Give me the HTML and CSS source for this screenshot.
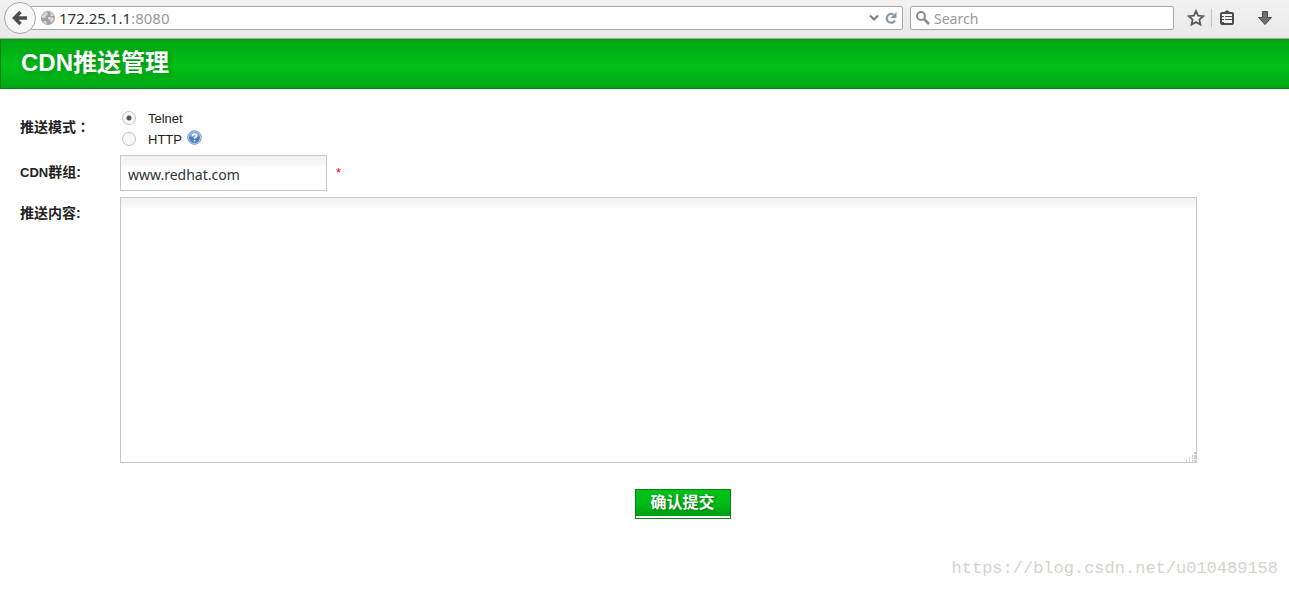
FILE: index.html
```
<!DOCTYPE html>
<html lang="zh-CN">
<head>
    <meta charset="UTF-8">
    <meta name="viewport" content="width=device-width, initial-scale=1.0">
    <title>CDN推送管理</title>
    <link rel="stylesheet" href="styles.css">
</head>
<body>
    <nav class="toolbar">
        <button type="button" class="back" aria-label="Back">
            <svg width="16" height="16" viewBox="0 0 16 16"><path d="M8.5 2L2.5 8l6 6M3 8h12" fill="none" stroke="#4c4c4c" stroke-width="3.4"/></svg>
        </button>
        <div class="address">
            <svg class="globe" width="14" height="14" viewBox="0 0 14 14"><circle cx="7" cy="7" r="7" fill="#a0a0a0"/><path d="M1 5l2-3 3-1 1 2-2 2-1 2-3 0zM9 1l3 2 1 2-3 0zM7 6l3 0 3 1-1 3-2 2-1-3-2-1zM2 10l3 0 1 3-2 0z" fill="#d8d8d8"/></svg>
            <span class="url">172.25.1.1<span class="port">:8080</span></span>
            <button type="button" class="icon-button" aria-label="History">
                <svg width="10" height="8" viewBox="0 0 10 8"><path d="M1 1.5l4 4 4-4" fill="none" stroke="#808080" stroke-width="2.2"/></svg>
            </button>
            <button type="button" class="icon-button" aria-label="Reload">
                <svg width="12" height="12" viewBox="0 0 12 12"><path d="M8.5 2.6A4.4 4.4 0 1 0 10 8.5" fill="none" stroke="#8795a5" stroke-width="2.2"/><path d="M11.5 0v6h-6z" fill="#8795a5"/></svg>
            </button>
        </div>
        <div class="search">
            <svg width="14" height="14" viewBox="0 0 14 14"><circle cx="5" cy="5" r="4" fill="none" stroke="#8d8d8d" stroke-width="2"/><path d="M8 8l5 5" stroke="#8d8d8d" stroke-width="2.6"/></svg>
            <input type="text" placeholder="Search" aria-label="Search">
        </div>
        <div class="tools">
            <button type="button" class="icon-button" aria-label="Bookmark">
                <svg width="18" height="18" viewBox="0 0 18 18"><path d="M9 2l2.1 4.6 5 .6-3.7 3.4 1 5L9 13.1l-4.4 2.5 1-5L1.9 7.2l5-.6z" fill="#f4f4f4" stroke="#5a5a5a" stroke-width="1.8"/></svg>
            </button>
            <span class="divider"></span>
            <button type="button" class="icon-button" aria-label="Bookmarks list">
                <svg width="14" height="15" viewBox="0 0 14 15"><rect x="1" y="3" width="12" height="11" rx="1" fill="#f4f4f4" stroke="#4c4c4c" stroke-width="2"/><path d="M3 3l4-3 4 3v1H3z" fill="#4c4c4c"/><path d="M2 6.500h2M2 9.500h2M2 12.500h2M5 6.500h7M5 9.500h7" stroke="#4c4c4c" stroke-width="1"/></svg>
            </button>
            <button type="button" class="icon-button download" aria-label="Downloads">
                <svg width="14" height="14" viewBox="0 0 14 14"><path d="M4.5.5h5v6h4L7 13.5.5 6.5h4z" fill="#707070" stroke="#4c4c4c"/></svg>
            </button>
        </div>
    </nav>

    <header class="page-header">
        <h1>CDN推送管理</h1>
    </header>

    <form class="push-form">
        <div class="row" role="radiogroup" aria-labelledby="modeLabel">
            <span class="label mode-label" id="modeLabel">推送模式<span class="colon" lang="zh-TW">：</span></span>
            <div class="modes">
                <div class="mode">
                    <input type="radio" name="mode" id="telnet" checked>
                    <label for="telnet">Telnet</label>
                </div>
                <div class="mode">
                    <input type="radio" name="mode" id="http">
                    <label for="http">HTTP</label>
                    <svg class="help" width="15" height="15" viewBox="0 0 15 15">
                        <circle cx="7.5" cy="7.5" r="6.8" fill="#c9dcf0" stroke="#7194c0"/>
                        <circle cx="7.5" cy="7.5" r="5.5" fill="#4a7fbf"/>
                        <path d="M2.5 6a5 4.5 0 0 1 10 0q-5 3-10 0z" fill="#82aadb"/>
                        <path d="M5.5 6q0-2 2-2t2 1.700q0 1-1 1.500t-1 1.500M7.5 10v1.500" fill="none" stroke="#fff" stroke-width="1.5"/>
                    </svg>
                </div>
            </div>
        </div>

        <div class="row">
            <label class="label group-label" for="group"><span class="latin">CDN</span>群组:</label>
            <input type="text" class="field" id="group" value="www.redhat.com">
            <span class="required">*</span>
        </div>

        <div class="row">
            <label class="label content-label" for="content">推送内容:</label>
            <div class="content-box">
                <textarea class="field" id="content"></textarea>
                <svg class="grip" width="10" height="10" viewBox="0 0 10 10"><path d="M8 1h2M6 4h1M8 4h2M3 6h1M6 6h1M8 6h2M0 9h1M3 9h1M6 9h1M8 9h2" stroke="#999" stroke-width="1"/></svg>
            </div>
        </div>

        <div class="actions">
            <button type="submit" class="submit"><span>确认提交</span></button>
        </div>
    </form>

    <footer class="watermark">https://blog.csdn.net/u010489158</footer>
</body>
</html>
```
FILE: styles.css
```
* {
    box-sizing: border-box;
}

body {
    margin: 0;
    background-color: #fff;
    color: #222;
    font-family: "Liberation Sans", "Noto Sans CJK SC", sans-serif;
    font-size: 13px;
}

/* Browser toolbar */
.toolbar {
    display: flex;
    align-items: center;
    height: 39px;
    padding: 0 17px 3px 4px;
    background: linear-gradient(#f2f2f2, #e9e9e9);
    border-bottom: 1px solid #a5a5a5;
    font-family: "Noto Sans", sans-serif;
}

.back {
    display: flex;
    align-items: center;
    justify-content: center;
    width: 32px;
    height: 32px;
    padding: 0;
    border: 1px solid #a0a6ae;
    border-radius: 50%;
    background-color: #f7f7f7;
    z-index: 1;
}

.address,
.search {
    display: flex;
    align-items: center;
    height: 24px;
    border: 1px solid #a8a8a8;
    border-radius: 2px;
    background-color: #fff;
}

.address {
    flex: 1;
    gap: 6px;
    margin-left: -6px;
    padding: 0 5px 0 10px;
}

.url {
    flex: 1;
    margin-left: -2px;
    color: #2e3436;
    font-size: 15px;
    line-height: 22px;
}

.port {
    color: #999;
}

.icon-button {
    display: flex;
    padding: 0;
    border: none;
    background: none;
}

.search {
    width: 264px;
    margin-left: 7px;
    padding: 0 5px;
    gap: 4px;
}

.search input {
    flex: 1;
    min-width: 0;
    padding: 2px 0 0;
    border: none;
    background: none;
    font-family: inherit;
    font-size: 14px;
}

.search input::placeholder {
    color: #999;
}

.tools {
    display: flex;
    align-items: center;
    gap: 8px;
    margin-left: 13px;
}

.divider {
    width: 1px;
    height: 18px;
    margin-left: -2px;
    background-color: #c4c4c4;
}

.download {
    margin-left: 16px;
}

/* Page header */
.page-header {
    height: 50px;
    padding: 0 20px;
    border: 1px solid #0a7a12;
    border-top-color: #009c10;
    border-right: none;
    background: linear-gradient(#00a814, #00c017 55%, #00a814);
}

.page-header h1 {
    margin: 0;
    color: #fff;
    font-size: 24px;
    line-height: 46px;
    text-shadow: 1px 1px 6px #00850f;
}

/* Form */
.push-form {
    padding: 18px 20px 0;
}

.row {
    display: flex;
    align-items: flex-start;
    margin-bottom: 6px;
}

.label {
    width: 100px;
    flex-shrink: 0;
    font-size: 14px;
    font-weight: bold;
    line-height: 20px;
}

.mode-label {
    padding-top: 9px;
}

.colon {
    font-family: "Noto Sans CJK TC", sans-serif;
}

.group-label {
    padding-top: 7px;
}

.content-label {
    padding-top: 6px;
}

.latin {
    font-size: 13px;
}

.modes {
    height: 42px;
}

.mode {
    display: flex;
    height: 21px;
    padding-left: 2px;
}

.mode label {
    margin-left: 12px;
    line-height: 24px;
}

.mode input {
    appearance: none;
    width: 14px;
    height: 14px;
    margin: 4px 0 0;
    border: 1px solid #c0c0c0;
    border-radius: 50%;
    background: #f8f8f8;
}

.mode input:checked {
    background: radial-gradient(circle, #555 0 2px, #f8f8f8 3px);
}

.help {
    margin: 2px 0 0 5px;
}

.field {
    border: 1px solid #c8c8c8;
    background: linear-gradient(#f1f1f1, #fafafa 10px, #fff 10px);
    color: #2e3436;
    font-family: "Noto Sans", "Noto Sans CJK SC", sans-serif;
    font-size: 14px;
}

input.field {
    width: 207px;
    height: 36px;
    padding: 2px 7px 0;
}

.required {
    margin-left: 9px;
    color: #f00;
    line-height: 36px;
}

.content-box {
    position: relative;
    width: 94%;
    margin-right: 72px;
}

textarea.field {
    display: block;
    width: 100%;
    height: 266px;
    padding: 8px;
    resize: none;
}

/* Resize handle in the text area corner */
.grip {
    position: absolute;
    right: 1px;
    bottom: 1px;
}

.actions {
    display: flex;
    justify-content: center;
    margin-top: 26px;
    padding-left: 76px;
}

.submit {
    width: 96px;
    height: 30px;
    padding: 0 0 2px;
    border: 1px solid #0a8212;
    background-color: #fff;
}

.submit span {
    display: block;
    height: 26px;
    background: linear-gradient(#00c217, #00bd16 50%, #009f13);
    color: #fff;
    font-family: "Liberation Sans", "Noto Sans CJK SC", sans-serif;
    font-size: 16px;
    font-weight: bold;
    line-height: 26px;
    text-shadow: 1px 1px 3px #006b0c;
}

.watermark {
    padding: 39px 11px 0;
    color: #d3d3cd;
    font-family: "Liberation Mono", monospace;
    font-size: 17px;
    line-height: 22px;
    text-align: right;
}
```
